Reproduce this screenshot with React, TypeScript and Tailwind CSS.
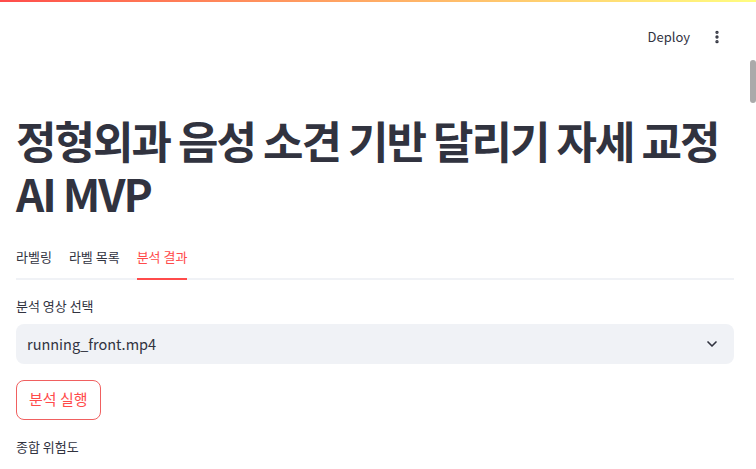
import { ChevronDown, EllipsisVertical } from "lucide-react";

const font = { fontFamily: '"Noto Sans CJK KR", "Noto Sans", sans-serif' };

const tabs = ["라벨링", "라벨 목록", "분석 결과"];

const App = () => {
    const active = 2;
    return (
        <div className="relative min-h-screen w-full bg-white text-[#31333f]" style={font}>
            <div className="h-[2px] w-full bg-gradient-to-r from-[#ff4b4b] to-[#fffd80]" />
            <header className="flex h-[70px] items-center justify-end gap-[19px] pr-[31px]">
                <span className="text-[13px]">Deploy</span>
                <EllipsisVertical size={16} strokeWidth={3} className="text-[#31333f]" />
            </header>
            <div className="absolute right-[0px] top-[60px] h-[43px] w-[6px] rounded-full bg-[#aaaaaa]" />

            <main className="pl-4 pr-[22px]">
                <h1 className="mt-[42px] text-[44px] font-bold leading-[1.2] tracking-[-0.045em]">
                    정형외과 음성 소견 기반 달리기 자세 교정 AI MVP
                </h1>

                <div className="mt-[20px] flex h-[40px] gap-[17px] border-b-2 border-[#f0f2f6]">
                    {tabs.map((t, i) => (
                        <button
                            key={t}
                            className={`-mb-[2px] flex items-center border-b-2 pb-[3px] text-[13px] ${i === active ? "border-[#ff4b4b] text-[#ff4b4b]" : "border-transparent"}`}
                        >
                            {t}
                        </button>
                    ))}
                </div>

                <p className="mt-[16px] text-[13px] leading-[20px]">분석 영상 선택</p>
                <div className="mt-[8px] flex h-[40px] items-center justify-between rounded-lg bg-[#f0f2f6] pl-[11px] pr-[14px]">
                    <span className="text-[14.5px]">running_front.mp4</span>
                    <ChevronDown size={16} strokeWidth={2.5} />
                </div>

                <button className="mt-[16px] flex h-[40px] items-center rounded-lg border border-[#f06060] px-[12px] text-[15px] text-[#ff4b4b]">
                    분석 실행
                </button>

                <p className="mt-[17px] text-[13px] leading-[20px]">종합 위험도</p>
            </main>
        </div>
    );
};

export default App;
